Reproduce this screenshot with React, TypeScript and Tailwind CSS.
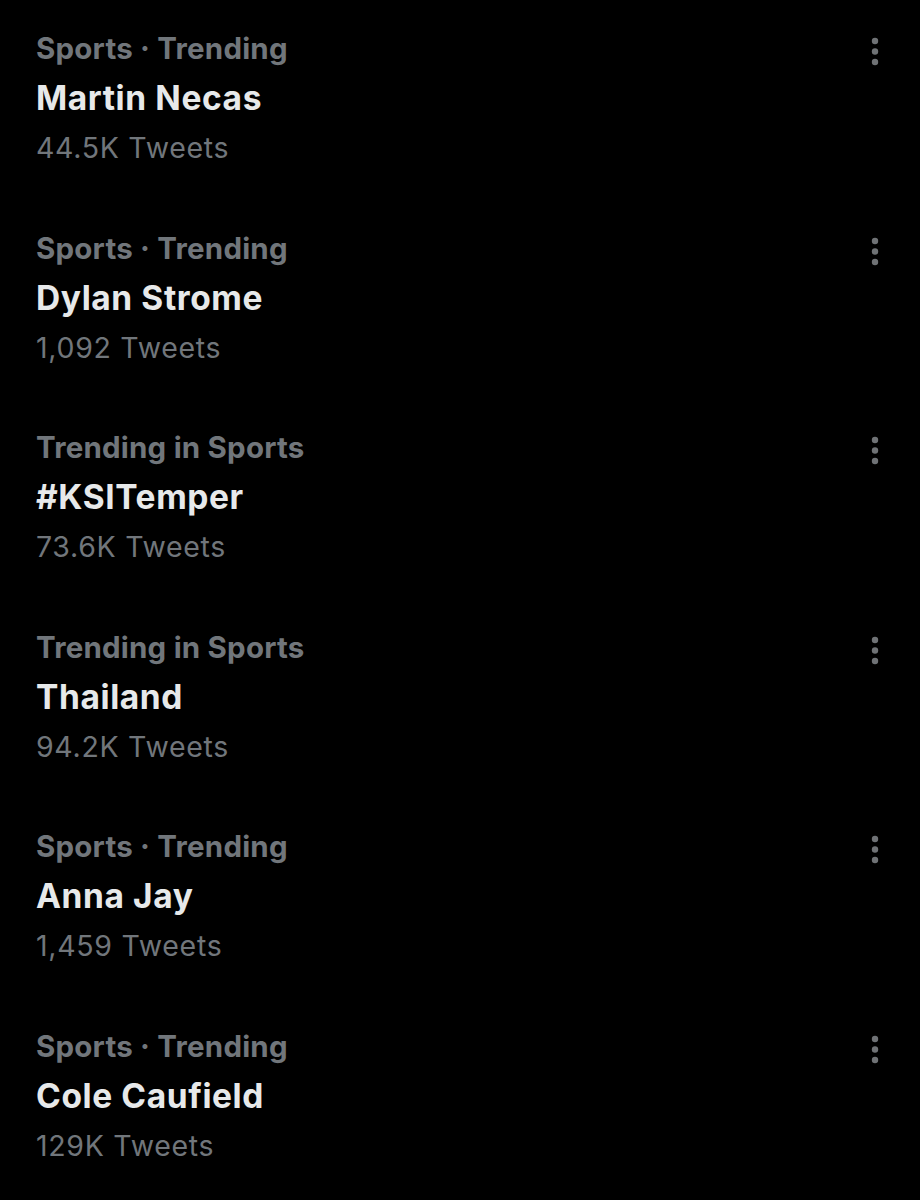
const trends = [
  { category: "Sports · Trending", title: "Martin Necas", count: "44.5K Tweets" },
  { category: "Sports · Trending", title: "Dylan Strome", count: "1,092 Tweets" },
  { category: "Trending in Sports", title: "#KSITemper", count: "73.6K Tweets" },
  { category: "Trending in Sports", title: "Thailand", count: "94.2K Tweets" },
  { category: "Sports · Trending", title: "Anna Jay", count: "1,459 Tweets" },
  { category: "Sports · Trending", title: "Cole Caufield", count: "129K Tweets" },
];

function MoreIcon() {
  return (
    <svg width="12" height="34" viewBox="0 0 12 34" className="text-[#6f7275]">
      <circle cx="6" cy="6" r="3.2" fill="currentColor" />
      <circle cx="6" cy="16.5" r="3.2" fill="currentColor" />
      <circle cx="6" cy="27" r="3.2" fill="currentColor" />
    </svg>
  );
}

export default function App() {
  return (
    <main
      className="min-h-[1200px] w-[920px] bg-black pt-[23px]"
      style={{ fontFamily: "Inter, 'Liberation Sans', sans-serif" }}
    >
      {trends.map((trend) => (
        <div key={trend.title} className="flex h-[199.5px] items-start pl-9 pr-[39px]">
          <div className="flex-1">
            <p className="text-[29.5px] font-bold leading-[50px] tracking-[0.2px] text-[#71767b]">
              {trend.category}
            </p>
            <p className="text-[33.5px] font-bold leading-[50px] tracking-[0.6px] text-[#e7e9ea]">
              {trend.title}
            </p>
            <p className="text-[28.5px] leading-[50px] tracking-[0.7px] text-[#71767b]">
              {trend.count}
            </p>
          </div>
          <div className="mt-[12px]">
            <MoreIcon />
          </div>
        </div>
      ))}
    </main>
  );
}
